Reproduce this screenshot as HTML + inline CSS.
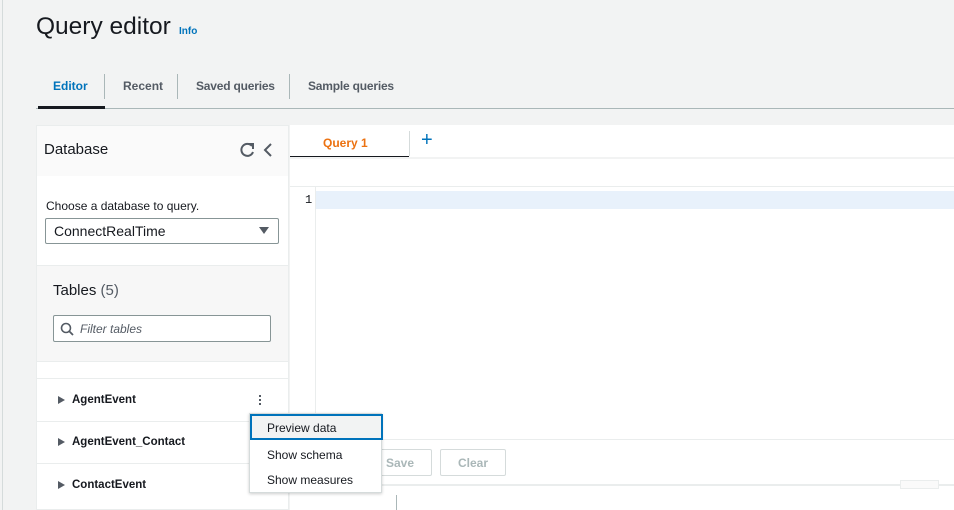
<!DOCTYPE html>
<html><head><meta charset="utf-8"><style>
*{box-sizing:border-box;margin:0;padding:0}
body{width:954px;height:510px;overflow:hidden;background:#f2f3f3;font-family:"Liberation Sans",sans-serif;color:#16191f;position:relative}
.a{position:absolute}
.b{font-weight:bold}
</style></head><body>
<div class="a" style="left:2px;top:0;width:1px;height:510px;background:#d5dbdb"></div>
<div class="a" style="left:36px;top:13px;font-size:24.5px">Query editor</div>
<div class="a b" style="left:179px;top:26px;font-size:10px;color:#0073bb">Info</div>
<div class="a" style="left:36px;top:108px;width:918px;height:1px;background:#aab7b8"></div>
<div class="a" style="left:38px;top:106px;width:67px;height:3px;background:#16191f"></div>
<div class="a b" style="left:53px;top:79px;font-size:12px;color:#0073bb">Editor</div>
<div class="a" style="left:104px;top:74px;width:1px;height:25px;background:#aab7b8"></div>
<div class="a b" style="left:123px;top:79px;font-size:12px;color:#545b64">Recent</div>
<div class="a" style="left:177px;top:74px;width:1px;height:25px;background:#aab7b8"></div>
<div class="a b" style="left:196px;top:79px;font-size:12px;color:#545b64;letter-spacing:-0.2px">Saved queries</div>
<div class="a" style="left:289px;top:74px;width:1px;height:25px;background:#aab7b8"></div>
<div class="a b" style="left:308px;top:79px;font-size:12px;color:#545b64;letter-spacing:-0.2px">Sample queries</div>

<!-- left panel -->
<div class="a" style="left:36px;top:125px;width:253px;height:385px;background:#fff;border:1px solid #eaeded"></div>
<div class="a" style="left:37px;top:126px;width:251px;height:50px;background:#fafafa"></div>
<div class="a" style="left:44px;top:141px;font-size:15px">Database</div>
<svg class="a" style="left:238px;top:141px" width="40" height="18" viewBox="0 0 40 18"><path d="M14 5 A6 6 0 1 0 15 11" fill="none" stroke="#545b64" stroke-width="2"/><path d="M10 3 L15 3 L15 8" fill="none" stroke="#545b64" stroke-width="2"/><path d="M33 3 L27 9 L33 15" fill="none" stroke="#545b64" stroke-width="2"/></svg>
<div class="a" style="left:46px;top:199px;font-size:12px">Choose a database to query.</div>
<div class="a" style="left:45px;top:218px;width:234px;height:26px;border:1px solid #879596;border-radius:2px;background:#fff"></div>
<div class="a" style="left:54px;top:223px;font-size:14px">ConnectRealTime</div>
<div class="a" style="left:259px;top:227px;width:0;height:0;border-left:5px solid transparent;border-right:5px solid transparent;border-top:7px solid #545b64"></div>
<div class="a" style="left:37px;top:265px;width:251px;height:97px;background:#f7f7f7;border-top:1px solid #eaeded;border-bottom:1px solid #eaeded"></div>
<div class="a" style="left:53px;top:282px;font-size:15px">Tables <span style="color:#545b64">(5)</span></div>
<div class="a" style="left:53px;top:315px;width:218px;height:27px;border:1px solid #879596;border-radius:2px;background:#fff"></div>
<svg class="a" style="left:60px;top:322px" width="14" height="14"><circle cx="6" cy="6" r="4.5" fill="none" stroke="#545b64" stroke-width="1.6"/><path d="M9.5 9.5 L13 13" stroke="#545b64" stroke-width="1.8"/></svg>
<div class="a" style="left:80px;top:322px;font-size:12px;font-style:italic;color:#545b64">Filter tables</div>
<div class="a" style="left:37px;top:378px;width:251px;height:1px;background:#eaeded"></div>
<div class="a" style="left:37px;top:421px;width:251px;height:1px;background:#eaeded"></div>
<div class="a" style="left:37px;top:463px;width:251px;height:1px;background:#eaeded"></div>
<div class="a" style="left:58px;top:396px;border-top:4.5px solid transparent;border-bottom:4.5px solid transparent;border-left:7px solid #545b64"></div>
<div class="a b" style="left:72px;top:394px;font-size:11.5px">AgentEvent</div>
<div class="a" style="left:58px;top:438px;border-top:4.5px solid transparent;border-bottom:4.5px solid transparent;border-left:7px solid #545b64"></div>
<div class="a b" style="left:72px;top:436px;font-size:11.5px">AgentEvent_Contact</div>
<div class="a" style="left:58px;top:481px;border-top:4.5px solid transparent;border-bottom:4.5px solid transparent;border-left:7px solid #545b64"></div>
<div class="a b" style="left:72px;top:479px;font-size:11.5px">ContactEvent</div>
<div class="a" style="left:259px;top:395px;width:2px;height:2px;background:#545b64;box-shadow:0 4px 0 #545b64,0 8px 0 #545b64"></div>

<!-- editor -->
<div class="a" style="left:290px;top:125px;width:664px;height:385px;background:#fff"></div>
<div class="a b" style="left:323px;top:136px;font-size:12px;color:#ec7211">Query 1</div>
<div class="a" style="left:290px;top:156px;width:119px;height:1px;background:#16191f"></div>
<div class="a" style="left:409px;top:131px;width:1px;height:25px;background:#d5dbdb"></div>
<div class="a" style="left:421px;top:129px;font-size:20px;color:#0073bb">+</div>
<div class="a" style="left:290px;top:157px;width:664px;height:2px;background:#f2f3f3"></div>
<div class="a" style="left:290px;top:186px;width:664px;height:1px;background:#eaeded"></div>
<div class="a" style="left:315px;top:187px;width:1px;height:252px;background:#eaeded"></div>
<div class="a" style="left:305px;top:193px;font-size:12px;font-family:'Liberation Mono',monospace">1</div>
<div class="a" style="left:316px;top:191px;width:638px;height:18px;background:#e8f1fb"></div>
<div class="a" style="left:290px;top:439px;width:664px;height:1px;background:#eaeded"></div>
<div class="a" style="left:368px;top:449px;width:64px;height:27px;border:1px solid #d5dbdb;border-radius:2px"></div>
<div class="a b" style="left:386px;top:456px;font-size:12px;color:#aab7b8">Save</div>
<div class="a" style="left:440px;top:449px;width:66px;height:27px;border:1px solid #d5dbdb;border-radius:2px"></div>
<div class="a b" style="left:458px;top:456px;font-size:12px;color:#aab7b8">Clear</div>
<div class="a" style="left:290px;top:484px;width:664px;height:2px;background:#eaeded"></div>
<div class="a" style="left:900px;top:480px;width:39px;height:9px;border:1px solid #eaeded;background:#fafafa"></div>
<div class="a" style="left:396px;top:495px;width:1px;height:15px;background:#aab7b8"></div>

<!-- menu -->
<div class="a" style="left:249px;top:413px;width:133px;height:80px;background:#fff;border:1px solid #d5dbdb;box-shadow:0 1px 3px rgba(0,0,0,.2)"></div>
<div class="a" style="left:250px;top:414px;width:133px;height:26px;border:2px solid #0073bb;background:#f2f3f3"></div>
<div class="a" style="left:267px;top:421px;font-size:12px">Preview data</div>
<div class="a" style="left:267px;top:448px;font-size:12px">Show schema</div>
<div class="a" style="left:267px;top:473px;font-size:12px">Show measures</div>
</body></html>
